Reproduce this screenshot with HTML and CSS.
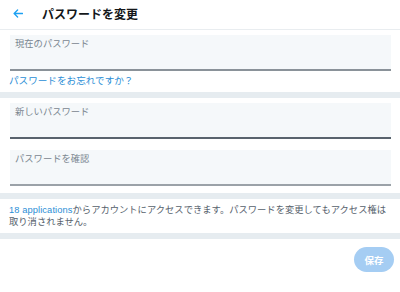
FILE: index.html
```html
<!DOCTYPE html>
<html lang="ja">
<head>
<meta charset="utf-8">
<link rel="stylesheet" href="styles.css">
</head>
<body>
<div class="page">
  <header class="header">
    <span class="back">
      <svg width="10" height="9" viewBox="0 0 10 9"><path d="M9.5 4.5H1.2M4.6 1L1.1 4.5L4.6 8" fill="none" stroke="#1da1f2" stroke-width="1.3" stroke-linecap="round" stroke-linejoin="round"/></svg>
    </span>
    <h1 class="title">パスワードを変更</h1>
  </header>
  <section class="group first">
    <div class="field f1"><span class="label">現在のパスワード</span></div>
    <a class="forgot">パスワードをお忘れですか？</a>
  </section>
  <div class="band"></div>
  <section class="group second">
    <div class="field f2"><span class="label">新しいパスワード</span></div>
    <div class="field f3"><span class="label">パスワードを確認</span></div>
  </section>
  <div class="band"></div>
  <p class="note"><span class="apps">18 applications</span>からアカウントにアクセスできます。パスワードを変更してもアクセス権は取り消されません。</p>
  <div class="band"></div>
  <div class="actions"><button class="save">保存</button></div>
</div>
</body>
</html>
```
FILE: styles.css
```css
* { box-sizing: border-box; }
html, body { margin: 0; padding: 0; background: #fff; }
body {
  font-family: "Liberation Sans", "Noto Sans CJK JP", sans-serif;
  color: #14171a;
}
.page { width: 400px; height: 292px; overflow: hidden; }
.header {
  height: 30px;
  display: flex;
  align-items: center;
  border-bottom: 1px solid #e9edf0;
  padding-left: 13px;
  padding-bottom: 3px;
}
.back { width: 10px; height: 9px; display: flex; margin-right: 19px; }
.title {
  margin: 0;
  font-size: 12px;
  font-weight: bold;
  font-family: "Noto Sans CJK JP", sans-serif;
  color: #14171a;
}
.group { padding: 0 9px 0 10px; }
.first { padding-top: 5px; height: 62px; }
.second { padding-top: 5px; height: 95px; display: flex; flex-direction: column; gap: 11px; }
.field {
  height: 36px;
  background: #f5f8fa;
  border-bottom: 2px solid #8a9299;
  padding: 3px 5px 0;
}
.f2 { border-bottom-color: #59636d; }
.f3 { border-bottom-color: #9ba2a8; }
.label {
  display: block;
  font-family: "Noto Sans CJK JP", sans-serif;
  font-size: 9.3px;
  line-height: 11px;
  color: #7a8690;
}
.forgot {
  display: block;
  margin-left: -1px;
  margin-top: 2px;
  font-family: "Noto Sans CJK JP", sans-serif;
  font-size: 9.6px;
  line-height: 14px;
  color: #2b8ed6;
}
.band { height: 6px; background: #e6ecf0; }
.note {
  margin: 0;
  height: 34px;
  padding: 6px 9px 0 9px;
  font-size: 9.3px;
  line-height: 11.5px;
  color: #56616c;
}
.apps { color: #2b8ed6; letter-spacing: 0.1px; }
.actions { display: flex; justify-content: flex-end; padding: 8px 6px 0 0; }
.save {
  width: 40px;
  height: 25px;
  border: none;
  border-radius: 13px;
  background: #a5cdf3;
  color: #fff;
  font-family: "Noto Sans CJK JP", sans-serif;
  font-weight: bold;
  font-size: 9.5px;
  padding: 0;
}
```
